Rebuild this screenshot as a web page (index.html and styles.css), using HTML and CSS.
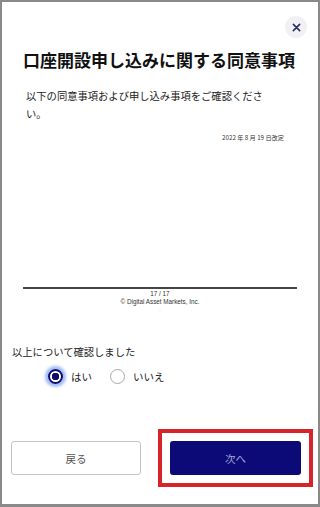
FILE: index.html
```html
<!DOCTYPE html>
<html lang="ja">
<head>
<meta charset="utf-8">
<title>口座開設申し込みに関する同意事項</title>
<link rel="stylesheet" href="styles.css">
</head>
<body>
<div class="frame">
  <div class="header">
    <button class="close" aria-label="閉じる">
      <svg width="9" height="9" viewBox="0 0 10 10"><path d="M1.5 1.5L8.5 8.5M8.5 1.5L1.5 8.5" stroke="#262a66" stroke-width="1.7" stroke-linecap="round"/></svg>
    </button>
  </div>
  <h1 class="title">口座開設申し込みに関する同意事項</h1>
  <p class="desc">以下の同意事項および申し込み事項をご確認ください。</p>
  <div class="doc">
    <div class="date">2022 年 8 月 19 日改定</div>
    <div class="doc-space"></div>
    <div class="rule"></div>
    <div class="doc-foot">
      <div>17 / 17</div>
      <div>© Digital Asset Markets, Inc.</div>
      <div class="dot">-</div>
    </div>
  </div>
  <div class="confirm">
    <div class="confirm-label">以上について確認しました</div>
    <div class="radios">
      <label class="radio"><span class="circle checked"></span><span>はい</span></label>
      <label class="radio"><span class="circle"></span><span>いいえ</span></label>
    </div>
  </div>
  <div class="buttons">
    <button class="btn back">戻る</button>
    <div class="highlight"><button class="btn next">次へ</button></div>
  </div>
</div>
</body>
</html>
```

FILE: styles.css
```css
* { box-sizing: border-box; }
html, body { margin: 0; padding: 0; }
body {
  width: 320px;
  height: 507px;
  font-family: "Noto Sans CJK JP", "Noto Sans", sans-serif;
  color: #222;
  background: #8c8c8c;
}
.frame {
  width: 320px;
  height: 507px;
  border-style: solid;
  border-color: #8a8a8a;
  border-width: 2px 2px 3px 2px;
  background: #fff;
  overflow: hidden;
}
.header {
  display: flex;
  justify-content: flex-end;
  padding: 14px 11px 0 0;
}
.close {
  width: 22px;
  height: 22px;
  border: none;
  border-radius: 50%;
  background: #f0f0f5;
  display: flex;
  align-items: center;
  justify-content: center;
  padding: 0;
}
.title {
  margin: 10px 0 0 0;
  padding-left: 21px;
  font-size: 17px;
  line-height: 24px;
  font-weight: 700;
  color: #111;
  white-space: nowrap;
}
.desc {
  margin: 15px 0 0 24px;
  width: 245px;
  font-size: 10.3px;
  line-height: 18px;
  color: #222;
}
.doc {
  margin-top: 11px;
}
.date {
  text-align: right;
  padding-right: 34px;
  font-size: 6.2px;
  line-height: 8px;
  color: #333;
}
.doc-space { height: 145px; }
.rule {
  margin: 0 21px;
  height: 2px;
  background: #454545;
}
.doc-foot {
  margin-top: 1px;
  text-align: center;
  font-family: "Liberation Sans", Arial, sans-serif;
  font-size: 6.3px;
  line-height: 8px;
  color: #333;
}
.doc-foot .dot { font-size: 4px; color: #888; }
.confirm {
  margin-top: 30px;
}
.confirm-label {
  padding-left: 10px;
  font-size: 10.3px;
  line-height: 16px;
  color: #222;
}
.radios {
  margin-top: 6px;
  height: 20px;
  padding-left: 46px;
  display: flex;
  align-items: center;
  gap: 18px;
}
.radio {
  display: flex;
  align-items: center;
  gap: 8px;
  font-size: 10.5px;
  color: #222;
}
.circle {
  width: 15px;
  height: 15px;
  border-radius: 50%;
  border: 1.5px solid #a8a8a8;
  background: #fff;
  flex: none;
}
.circle.checked {
  border: 2px solid #0c0b6e;
  background: radial-gradient(circle, #0c0b6e 0 3.5px, #fff 4px);
  box-shadow: 0 0 3px 3px rgba(80, 130, 240, 0.55);
}
.buttons {
  margin-top: 55px;
  padding-left: 9px;
  display: flex;
  gap: 29px;
}
.btn {
  height: 34px;
  border-radius: 3px;
  font-family: "Noto Sans CJK JP", sans-serif;
  font-size: 10.5px;
  padding: 0;
}
.back {
  width: 130px;
  background: #fff;
  border: 1px solid #c4c4c4;
  color: #555;
}
.highlight {
  margin: -12px;
  padding: 8px;
  border: 4px solid #d7232c;
  display: flex;
}
.next {
  width: 131px;
  background: #0b0a76;
  border: none;
  color: #a8a5dc;
}
```
